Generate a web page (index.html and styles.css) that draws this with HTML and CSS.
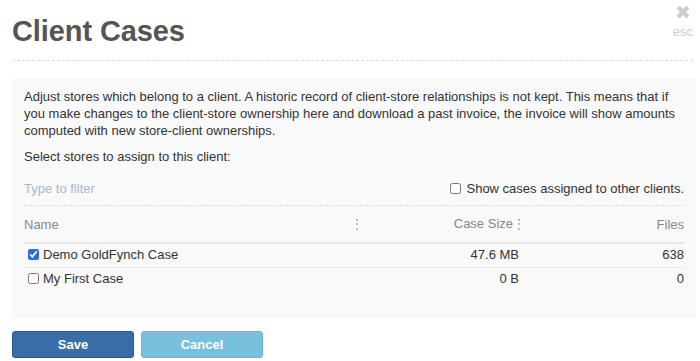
FILE: index.html
```html
<!DOCTYPE html>
<html lang="en">

<head>
    <meta charset="UTF-8">
    <link rel="stylesheet" href="styles.css">
    <title>Client Cases</title>
</head>

<body>
    <div id="modal">
        <div class="modal-head">
            <h1>Client Cases</h1>
            <a class="close" href="#">
                <span class="close-x">&#10006;</span>
                <span class="close-esc">esc</span>
            </a>
        </div>

        <div class="panel">
            <p class="intro">Adjust stores which belong to a client. A historic record of client-store relationships is not kept. This means that if you make changes to the client-store ownership here and download a past invoice, the invoice will show amounts computed with new store-client ownerships.</p>
            <p class="select-label">Select stores to assign to this client:</p>

            <div class="filter-row">
                <input class="filter" type="text" placeholder="Type to filter">
                <label class="others"><input type="checkbox"> Show cases assigned to other clients.</label>
            </div>

            <table class="cases">
                <tr>
                    <th class="col-name">Name <span class="grip">&#8942;</span></th>
                    <th class="col-size">Case Size<span class="grip">&#8942;</span></th>
                    <th class="col-files">Files</th>
                </tr>
                <tr>
                    <td><label><input type="checkbox" checked>Demo GoldFynch Case</label></td>
                    <td class="num">47.6 MB</td>
                    <td class="num">638</td>
                </tr>
                <tr class="last">
                    <td><label><input type="checkbox">My First Case</label></td>
                    <td class="num">0 B</td>
                    <td class="num">0</td>
                </tr>
            </table>
        </div>

        <div class="actions">
            <button class="btn btn-save" type="button">Save</button>
            <button class="btn btn-cancel" type="button">Cancel</button>
        </div>
    </div>
</body>

</html>
```

FILE: styles.css
```css
@charset "UTF-8";

/* ========BASIC======== */
body {
    margin: 0;
    padding: 0;
    font-family: "Liberation Sans", Helvetica, Arial, sans-serif;
    font-size: 13px;
    line-height: 17px;
    color: #333;
    background: #fff;
}

h1,
p {
    margin: 0;
}

/* ========MODAL======== */
#modal {
    padding: 0 4px 0 12px;
    border-left: 4px solid #f6f6f6;
    margin-left: -4px;
}

.modal-head {
    display: flex;
    justify-content: space-between;
    align-items: flex-start;
    height: 60px;
    border-bottom: 1px dashed #ddd;
    margin-right: 3px;
    margin-bottom: 17px;
}

.modal-head h1 {
    padding-top: 14px;
    font-size: 29px;
    line-height: 34px;
    font-weight: bold;
    color: #555;
    letter-spacing: -0.1px;
}

.close {
    display: flex;
    flex-direction: column;
    align-items: center;
    padding-top: 3px;
    margin-right: 0;
    color: #ccc;
    text-decoration: none;
}

.close-x {
    font-size: 19px;
    line-height: 20px;
}

.close-esc {
    font-size: 13px;
    line-height: 15px;
    margin-top: 1px;
}

/* ========PANEL======== */
.panel {
    background: #f9f9f9;
    padding: 10px 12px 27px;
}

.intro {
    margin-bottom: 9px;
}

.select-label {
    margin-bottom: 15px;
}

.filter-row {
    display: flex;
    justify-content: space-between;
    align-items: center;
    padding-bottom: 8px;
    border-bottom: 1px dashed #ddd;
}

.filter {
    border: 0;
    padding: 0;
    background: transparent;
    font-family: inherit;
    font-size: 13px;
    line-height: 17px;
    width: 200px;
}

.filter::placeholder {
    color: #a9b7cc;
}

.others input,
.cases input {
    width: 11px;
    height: 11px;
    margin: 0 2px 0 0;
    vertical-align: -1px;
    accent-color: #2a6fdb;
}

/* ========TABLE======== */
.cases {
    width: 100%;
    table-layout: fixed;
    border-collapse: collapse;
    margin-top: 4px;
}

.cases th {
    padding: 5px 0 9px;
    font-weight: normal;
    color: #888;
    border-bottom: 2px solid #e8e8e8;
}

.cases td {
    height: 20px;
    padding: 0 0 3px;
    border-bottom: 1px solid #e8e8e8;
}

.cases tr.last td {
    border-bottom: 0;
}

.cases td label {
    padding-left: 4px;
}

.cases td input {
    margin-right: 4px;
}

.col-name {
    text-align: left;
    width: 336px;
}

.col-name .grip {
    float: right;
    margin-right: -3px;
}

.col-size {
    text-align: right;
    width: 165px;
}

.col-files {
    text-align: right;
}

.grip {
    color: #999;
    font-size: 12px;
}

.num {
    text-align: right;
}

.cases td.num:nth-child(2) {
    padding-right: 6px;
}

/* ========ACTIONS======== */
.actions {
    display: flex;
    gap: 7px;
    padding-top: 13px;
}

.btn {
    width: 122px;
    height: 27px;
    border-radius: 3px;
    font-family: inherit;
    font-size: 13px;
    font-weight: bold;
    color: #fff;
}

.btn-save {
    background: #3a6da8;
    border: 1px solid #2b5a8f;
}

.btn-cancel {
    background: #79c0dd;
    border: 1px solid #6bb4d3;
}
```
